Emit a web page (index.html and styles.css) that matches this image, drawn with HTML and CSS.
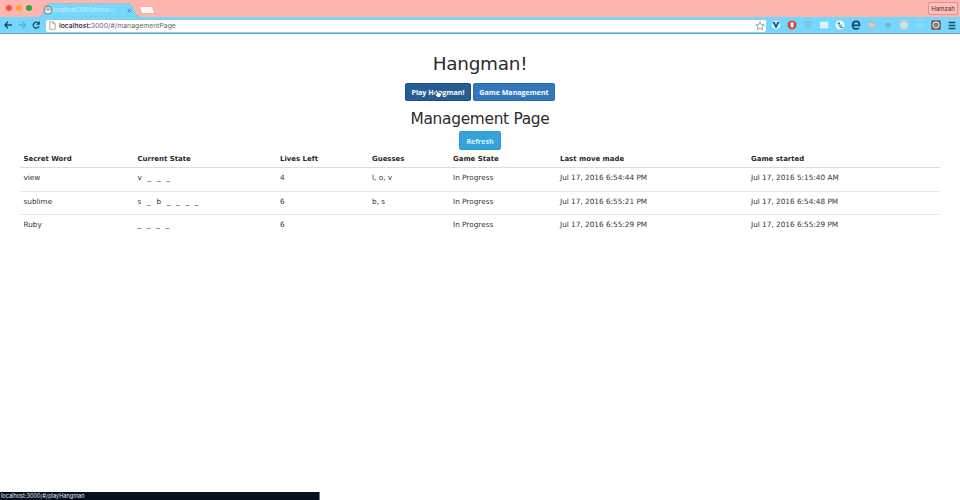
FILE: index.html
```html
<!DOCTYPE html>
<html lang="en">
<head>
<meta charset="utf-8">
<title>Hangman</title>
<link rel="stylesheet" href="styles.css">
</head>
<body>
<header class="browser">
  <div class="tabstrip">
    <div class="lights"><i class="red"></i><i class="yellow"></i><i class="green"></i></div>
    <div class="tab">
      <svg class="tab-shape" viewBox="0 0 101 14"><path d="M0 14C3 13 4 10 5 7S7 1 10 .5H90C93 1 94 4 95 7S98 13 101 14Z" fill="#75d7fd" stroke="#9bb6c2" stroke-width=".5"/></svg>
      <svg class="favicon" viewBox="0 0 10 10"><circle cx="5" cy="5" r="4" fill="#f1f8fa" stroke="#50656e" stroke-width=".8"/><path d="M5 1.500v4.500M3 3.500v2M7 3.500v2" fill="none" stroke="#52626a" stroke-width=".8"/></svg>
      <span class="tab-title">localhost:3000/#/manag</span>
      <svg class="close" viewBox="0 0 5 5"><path d="M.8.8l3.400 3.400M4.200.8L.8 4.200" stroke="#47788e" stroke-width=".9"/></svg>
    </div>
    <svg class="newtab" viewBox="0 0 17 8"><path d="M1 .5h11q1 0 1.500 1l2 5q.5 1-.8 1H4Q3 7.500 2.500 6.500L.7 1.500Q.3.5 1 .5Z" fill="#fff5f3" stroke="#c99c97" stroke-width=".5"/></svg>
    <span class="profile">Hamzah</span>
  </div>
  <div class="toolbar">
    <svg class="nav" viewBox="0 0 44 18"><g fill="none" stroke-width="1.300"><path d="M12 9H5M8 5.800L4.900 9 8 12.200" stroke="#244553"/><path d="M18.500 9h7M22.500 5.800L25.600 9l-3.100 3.200" stroke="#5aaed0"/><path d="M38.600 7.300A3 3 0 1 0 39 10.300" stroke="#244553"/></g><path d="M39.800 5v3.700h-3.700Z" fill="#244553"/></svg>
    <div class="address">
      <svg class="page" viewBox="0 0 7 9"><path d="M.7.7h3.500l2 2v5.600H.7ZM4.100.8v2h2" fill="#fff" stroke="#8c8c8c" stroke-width=".7"/></svg>
      <span class="url"><b>localhost:</b>3000/#/managementPage</span>
      <svg class="star" viewBox="0 0 10 10"><path d="M5 .8l1.250 2.800 3.050.3-2.300 2 .7 3L5 7.400 2.300 8.900l.7-3-2.300-2 3.050-.3Z" fill="#fff" stroke="#737d82" stroke-width=".7"/></svg>
    </div>
    <div class="extensions">
      <svg viewBox="0 0 10 10"><circle cx="5" cy="5" r="4.400" fill="#d9f1fa"/><path d="M1.500 2h2.300L5 5.200 6.300 2h2.200L5 8.800Z" fill="#0b5388"/></svg>
      <svg viewBox="0 0 10 10"><path d="M3.200.7h3.600l2.500 2.500v3.600L6.800 9.300H3.200L.7 6.800V3.200Z" fill="#dd4130"/><path d="M3.600 3v3L5 8l1.600-1.400V3L5 2Z" fill="#fff"/></svg>
      <svg viewBox="0 0 10 10"><path d="M5 .8l3.500 1.200Q8.500 7 5 9.200 1.500 7 1.500 2Z" fill="#78bdd8"/><path d="M3 3l2 4 2-4M2 3.500h6" fill="none" stroke="#8fcbe0" stroke-width=".8"/></svg>
      <svg viewBox="0 0 10 10"><rect x="1" y="1.700" width="8.200" height="6.600" rx=".5" fill="#e5f5fb"/><path d="M2 3.500h6M2 5h6M2 6.500h6" stroke="#d1e9f2" stroke-width=".5"/></svg>
      <svg viewBox="0 0 10 10"><circle cx="5" cy="5" r="4.500" fill="#eff9fd"/><path d="M4 1.800v3.700q0 1.600 1.700 1.600M6 4.500v3h2M2.500 3.500H5" fill="none" stroke="#327da3" stroke-width="1"/></svg>
      <svg viewBox="0 0 10 10"><path d="M1.600 5.300H8.500Q8.500 1.400 5.200 1.300T1.600 5.100 5.100 8.900Q6.800 9 8.100 8.100" fill="none" stroke="#164366" stroke-width="1.700"/></svg>
      <svg viewBox="0 0 10 10"><circle cx="5" cy="5" r="4.400" fill="#a9bfca"/><path d="M2.800 7V3.800h2V7M4.800 4h2.300v3" fill="none" stroke="#e0eaee" stroke-width=".8"/></svg>
      <svg viewBox="0 0 10 10"><path d="M5 2v6M2 5h6M3 3l4 4M7 3L3 7" stroke="#7aa5b8" stroke-width="1"/></svg>
      <svg viewBox="0 0 10 10"><rect x=".5" y=".5" width="9" height="9" rx="1" fill="#b8d2dd"/><g fill="none" stroke="#e9f3f7" stroke-width=".7"><ellipse cx="5" cy="5" rx="3.500" ry="1.400"/><ellipse cx="5" cy="5" rx="1.400" ry="3.500"/></g></svg>
      <svg viewBox="0 0 10 10"><g fill="none" stroke="#a9d5e6" stroke-width=".9"><circle cx="5" cy="5" r="4.300" stroke-dasharray="1 .6"/><circle cx="5" cy="5" r="2.200"/></g><circle cx="5" cy="5" r=".8" fill="#b4dfef"/></svg>
      <svg viewBox="0 0 10 10"><rect x=".2" y=".2" width="9.600" height="9.600" rx="1.500" fill="#655b5b"/><circle cx="5" cy="5" r="2.900" fill="#786864" stroke="#eee5e0" stroke-width="1.100"/><circle cx="5" cy="5" r="1.100" fill="#cf7e71"/></svg>
      <svg viewBox="0 0 10 10"><path d="M1.700 2.500h6.600M1.700 5.500h6.600M1.700 8.500h6.600" stroke="#244553" stroke-width="1.300"/></svg>
    </div>
  </div>
</header>
<main>
  <h1>Hangman!</h1>
  <nav class="actions">
    <button class="btn play">Play Hangman!
      <svg class="pointer" viewBox="0 0 8 9"><path d="M2 1q1-.6 1.400.4L4 3.300l2.500.5Q7.600 4 7.500 5L7 7.200 5.800 8.500H3.300L.9 5.600Q.7 4.600 1.700 4.800l.8.5L1.600 1.800Z" fill="#fff" stroke="#142535" stroke-width=".7"/></svg>
    </button>
    <button class="btn">Game Management</button>
  </nav>
  <h2>Management Page</h2>
  <button class="btn refresh">Refresh</button>
  <table>
    <colgroup><col class="c1"><col class="c2"><col class="c3"><col class="c4"><col class="c5"><col class="c6"><col class="c7"></colgroup>
    <thead><tr><th>Secret Word</th><th>Current State</th><th>Lives Left</th><th>Guesses</th><th>Game State</th><th>Last move made</th><th>Game started</th></tr></thead>
    <tbody>
      <tr><td>view</td><td class="state">v _ _ _</td><td>4</td><td>l, o, v</td><td>In Progress</td><td>Jul 17, 2016 6:54:44 PM</td><td>Jul 17, 2016 5:15:40 AM</td></tr>
      <tr><td>sublime</td><td class="state">s _ b _ _ _ _</td><td>6</td><td>b, s</td><td>In Progress</td><td>Jul 17, 2016 6:55:21 PM</td><td>Jul 17, 2016 6:54:48 PM</td></tr>
      <tr><td>Ruby</td><td class="state">_ _ _ _</td><td>6</td><td></td><td>In Progress</td><td>Jul 17, 2016 6:55:29 PM</td><td>Jul 17, 2016 6:55:29 PM</td></tr>
    </tbody>
  </table>
</main>
<footer class="status">localhost:3000/#/playHangman</footer>
</body>
</html>
```
FILE: styles.css
```css
* { box-sizing: border-box; }
body {
  margin: 0;
  height: 500px;
  overflow: hidden;
  display: flex;
  flex-direction: column;
  background: #fff;
  color: #333;
  font-family: "DejaVu Sans", sans-serif;
  font-size: 7.3px;
}
svg { display: block; flex: none; }
.browser { font-family: Inter, "Liberation Sans", sans-serif; }
.tabstrip {
  height: 17px;
  display: flex;
  align-items: flex-end;
  background: #ffb5af;
}
.lights { display: flex; gap: 4px; padding: 0 0 1px 5.500px; width: 39px; height: 17px; align-items: center; }
.lights i { width: 6px; height: 6px; border-radius: 50%; }
.red { background: #fb534b; }
.yellow { background: #f5ac32; }
.green { background: #2ba83b; }
.tab {
  position: relative;
  width: 101px;
  height: 14px;
  display: flex;
  align-items: center;
  padding-left: 4px;
}
.tab-shape { position: absolute; inset: 0; width: 101px; height: 14px; }
.favicon { position: relative; width: 10px; height: 10px; }
.tab-title {
  position: relative;
  width: 70px;
  white-space: nowrap;
  font-size: 5.500px;
  line-height: 8px;
  color: #d5f3ff;
  -webkit-mask-image: linear-gradient(90deg, #000 70%, transparent);
}
.close { position: relative; width: 5px; height: 5px; margin-left: 4px; }
.newtab { width: 17px; height: 8px; margin: 0 0 3px -1px; }
.profile {
  margin: 0 2px 2px auto;
  width: 30px;
  height: 13px;
  border: 1px solid #d19791;
  border-radius: 2px;
  background: #ffbeb8;
  color: #4a3130;
  font-size: 6.100px;
  line-height: 11px;
  text-align: center;
}
.toolbar {
  height: 17px;
  display: flex;
  align-items: center;
  background: #75d7fd;
  border-bottom: 1px solid #78a7bb;
}
.nav { width: 44px; height: 18px; }
.address {
  width: 720px;
  height: 13px;
  margin-left: 2px;
  padding: 0 1px 0 3px;
  display: flex;
  align-items: center;
  background: #fff;
  border-top: 1px solid #8bc9e2;
  border-radius: 2px;
}
.page { width: 7px; height: 9px; }
.url { margin-left: 3px; font-size: 6.850px; color: #666; }
.url b { font-weight: 500; color: #222; }
.star { width: 10px; height: 10px; margin-left: auto; }
.extensions { display: flex; gap: 6px; margin-left: 5px; }
.extensions svg { width: 10px; height: 10px; }
main { display: flex; flex-direction: column; align-items: center; padding: 19px 20px 0; }
h1, h2 { margin: 0; font-weight: 400; color: #2c2c2c; }
h1 { font-size: 18.400px; line-height: 22px; letter-spacing: -.25px; }
h2 { margin-top: 8px; font-size: 15.400px; line-height: 20px; letter-spacing: -.3px; }
.actions { display: flex; gap: 2px; margin-top: 8px; }
.btn {
  position: relative;
  height: 18px;
  width: 82px;
  padding: 0;
  border: 1px solid #2d6da7;
  border-radius: 2px;
  background: #3276bb;
  color: #fff;
  font: 700 7.100px/16px "Open Sans", sans-serif;
  white-space: nowrap;
}
.play { width: 66px; background: #265d94; border-color: #1d4e7f; }
.pointer { position: absolute; left: 28px; top: 5px; width: 8px; height: 9px; }
.refresh {
  width: 42px;
  height: 19px;
  margin-top: 2px;
  color: #d8f3ff;
  border-color: #269bd5;
  background: repeating-conic-gradient(#3baadd 0 25%, #2b99d6 0 50%) 0 0 / 2px 2px;
}
table { width: 920px; table-layout: fixed; border-collapse: separate; border-spacing: 0; }
.c1 { width: 114px; }
.c2 { width: 142.500px; }
.c3 { width: 92px; }
.c4 { width: 81px; }
.c5 { width: 107px; }
.c6 { width: 191px; }
th, td { padding: 0 0 0 3.500px; text-align: left; white-space: nowrap; }
th { height: 18px; padding-top: 1px; font-size: 6.950px; border-bottom: 1px solid #ddd; color: #292929; }
td { height: 23.700px; padding-top: 5px; line-height: 10px; vertical-align: top; border-bottom: 1px solid #e6e6e6; }
tr:last-child td { border-bottom: 0; }
.state { word-spacing: 3.400px; }
.status {
  width: 320px;
  height: 8px;
  margin-top: auto;
  padding-left: 1px;
  background: #06111f;
  border-right: 1px solid #777;
  color: #e1e5e9;
  font: 5.600px/8px Inter, sans-serif;
}
```
